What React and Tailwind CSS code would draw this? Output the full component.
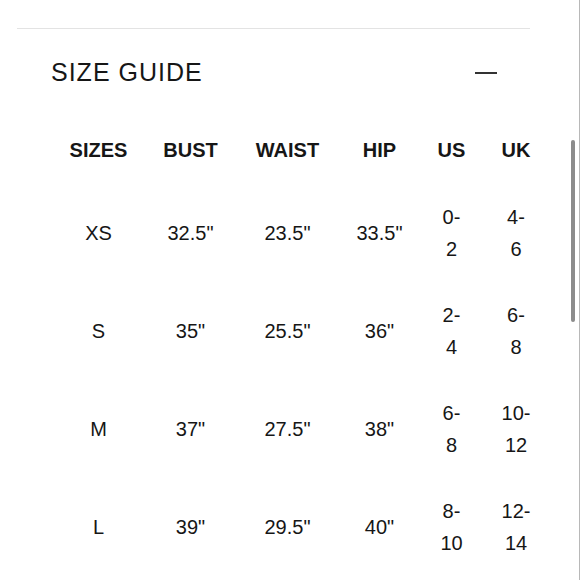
const headers = ['SIZES', 'BUST', 'WAIST', 'HIP', 'US', 'UK'];

const rows = [
  ['XS', '32.5"', '23.5"', '33.5"', ['0-', '2'], ['4-', '6']],
  ['S', '35"', '25.5"', '36"', ['2-', '4'], ['6-', '8']],
  ['M', '37"', '27.5"', '38"', ['6-', '8'], ['10-', '12']],
  ['L', '39"', '29.5"', '40"', ['8-', '10'], ['12-', '14']],
];

const cols = 'grid grid-cols-[93px_91px_103px_81px_63px_66px]';

const Cell = ({ value }) => (
  <div className="flex flex-col items-center justify-center text-center">
    {Array.isArray(value)
      ? value.map((line, i) => (
          <span key={i} className="leading-[32px]">{line}</span>
        ))
      : <span className="leading-[32px]">{value}</span>}
  </div>
);

export default function App() {
  return (
    <div
      className="relative w-[580px] h-[580px] overflow-hidden bg-white border-r border-[#b8b8b8] text-[#161616]"
      style={{ fontFamily: '"Liberation Sans", Arial, sans-serif' }}
    >
      {/* Scrollbar thumb */}
      <div className="absolute left-[571px] top-[140px] w-[4px] h-[182px] rounded-full bg-[#8c8c8c]" />

      <div className="ml-[17px] mt-[28px] w-[513px] border-t border-[#e3e3e3]">
        {/* Accordion header */}
        <div className="h-[87px] flex items-center justify-between pl-[34px] pr-[33px]">
          <h2 className="text-[25px] tracking-[1px] font-normal">SIZE GUIDE</h2>
          <span className="block w-[22px] h-[2px] bg-[#333]" />
        </div>

        {/* Size table */}
        <div className="ml-[35px]">
          <div className={`${cols} h-[68px] items-center`}>
            {headers.map((h) => (
              <div key={h} className="text-center text-[20px] font-bold">{h}</div>
            ))}
          </div>
          {rows.map((row) => (
            <div key={row[0]} className={`${cols} h-[98px] items-center text-[20px]`}>
              {row.map((v, i) => <Cell key={i} value={v} />)}
            </div>
          ))}
        </div>
      </div>
    </div>
  );
}
